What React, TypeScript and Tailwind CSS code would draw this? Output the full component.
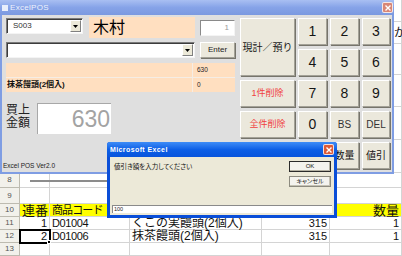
import type { ReactNode } from 'react';
import clsx from 'clsx';

const sans = "font-['Liberation_Sans','Noto_Sans_CJK_JP',sans-serif]";

function Btn({ children, className }: { children?: ReactNode; className?: string }) {
  return (
    <div
      className={clsx(
        'flex items-center justify-center border border-t-white border-l-white border-r-[#a3a197] border-b-[#a3a197] bg-[#ebe8dc] shadow-[1px_1px_0_#76746b]',
        className,
      )}
    >
      {children}
    </div>
  );
}

function Combo({ value, className }: { value?: string; className?: string }) {
  return (
    <div
      className={clsx(
        'flex border border-t-[#7a7a7a] border-l-[#7a7a7a] border-r-[#f4f4f4] border-b-[#f4f4f4] bg-white shadow-[inset_1px_1px_0_#3c3c3c]',
        className,
      )}
    >
      <span className="flex-1 pl-[6px] pt-[1px] text-[8px] leading-[12px] text-[#333]">{value}</span>
      <span className="my-[1px] mr-[1px] flex w-[11px] items-center justify-center border border-t-white border-l-white border-r-[#808080] border-b-[#808080] bg-[#ece9d8]">
        <svg width="5" height="3" viewBox="0 0 5 3">
          <path d="M0 0h5L2.5 3z" fill="#000" />
        </svg>
      </span>
    </div>
  );
}

function CloseX({ className }: { className?: string }) {
  return (
    <div className={clsx('flex items-center justify-center rounded-[2px] border border-white/80', className)}>
      <svg width="6" height="6" viewBox="0 0 6 6">
        <path d="M0.5 0.5l5 5M5.5 0.5l-5 5" stroke="#fff" strokeWidth="1.4" />
      </svg>
    </div>
  );
}

function PosWindow() {
  return (
    <div className="absolute left-0 top-0 flex h-[174px] w-[394px] flex-col bg-[#7f9de3]">
      <div className="flex h-[15px] items-center bg-linear-to-b from-[#a9bff2] via-[#86a3e8] to-[#7b99e0] pl-[2px] pr-[1px]">
        <div className="mr-[2px] h-[6px] w-[6px] bg-[#e8eefc]" />
        <span className="text-[8px] leading-none tracking-[0.3px] text-[#eef2fc]">ExcelPOS</span>
        <CloseX className="ml-auto h-[11px] w-[11px] bg-[#d88676]" />
      </div>
      <div className="mx-[2px] mb-[2px] flex flex-1 bg-[#dfdfdf] pl-[4px] pt-[2px]">
        <div className="flex w-[229px] flex-col">
          <div className="flex h-[21px] items-start">
            <Combo value="S003" className="mt-[1px] h-[16px] w-[77px]" />
            <div className="ml-[6px] flex h-[21px] w-[106px] items-center bg-[#ffdfc0] pl-[4px] text-[16px] leading-none text-black">
              木村
            </div>
            <div className="ml-[5px] mt-[3px] flex h-[16px] w-[35px] items-center justify-end border border-t-[#8a8a8a] border-l-[#8a8a8a] border-r-[#f4f4f4] border-b-[#f4f4f4] bg-white pr-[5px] text-[8px] text-[#9a9a9a]">
              1
            </div>
          </div>
          <div className="mt-[4px] flex h-[16px]">
            <Combo className="h-[16px] w-[189px]" />
            <Btn className="ml-[5px] h-[16px] w-[35px] text-[8px] text-[#222]">Enter</Btn>
          </div>
          <div className="mt-[5px] flex flex-col gap-[1px] bg-[#f5ede5]">
            <div className="flex h-[14px]">
              <div className="w-[186px] bg-[#ffdfc0]" />
              <div className="ml-[1px] flex flex-1 items-center bg-[#ffdfc0] pl-[4px] text-[6.5px] text-[#222]">630</div>
            </div>
            <div className="flex h-[14px]">
              <div className="flex w-[186px] items-center bg-[#ffdfc0] pl-[1px] text-[8px] font-bold text-[#111]">
                抹茶饅頭(2個入)
              </div>
              <div className="ml-[1px] flex flex-1 items-center bg-[#ffdfc0] pl-[4px] text-[6.5px] text-[#222]">0</div>
            </div>
          </div>
          <div className="mt-[11px] flex items-start">
            <div className="mt-[1px] w-[25px] text-[12px] leading-[13px] text-[#222]">
              買上
              <br />
              金額
            </div>
            <div className="ml-[6px] flex h-[31px] w-[74px] items-center justify-end border-l border-t border-[#a8a8a8] bg-white pr-[1px] text-[23px] leading-none text-[#a3a3a3]">
              630
            </div>
          </div>
          <div className="-ml-[3px] mb-[2px] mt-auto text-[6.5px] leading-[8px] text-[#222]">Excel POS Ver2.0</div>
        </div>
        <div className="ml-[5px] mt-[1px] grid grid-cols-[55px_29px_29px_28px] grid-rows-[27px_27px_27px_27px_27px] gap-x-[3px] gap-y-[4px] text-[#151515]">
          <Btn className="row-span-2 text-[10px]">現計／預り</Btn>
          <Btn className="text-[14px]">1</Btn>
          <Btn className="text-[14px]">2</Btn>
          <Btn className="text-[14px]">3</Btn>
          <Btn className="text-[14px]">4</Btn>
          <Btn className="text-[14px]">5</Btn>
          <Btn className="text-[14px]">6</Btn>
          <Btn className="text-[9px] text-[#f04040]">1件削除</Btn>
          <Btn className="text-[14px]">7</Btn>
          <Btn className="text-[14px]">8</Btn>
          <Btn className="text-[14px]">9</Btn>
          <Btn className="text-[9px] text-[#f04040]">全件削除</Btn>
          <Btn className="text-[14px]">0</Btn>
          <Btn className="text-[10px] text-[#333]">BS</Btn>
          <Btn className="text-[10px] text-[#333]">DEL</Btn>
          <Btn className="col-start-3 text-[10px]">数量</Btn>
          <Btn className="border-[#555] text-[10px]">値引</Btn>
        </div>
      </div>
    </div>
  );
}

function Dialog() {
  return (
    <div className="absolute left-[107px] top-[142px] flex h-[76px] w-[230px] flex-col rounded-t-[3px] bg-[#0a4ed8]">
      <div className="flex h-[15px] items-center rounded-t-[3px] bg-linear-to-b from-[#3d8cf7] via-[#0d5fe6] to-[#0854dc] pl-[3px] pr-[3px]">
        <span className="text-[7px] font-bold leading-none tracking-[0.4px] text-white">Microsoft Excel</span>
        <CloseX className="ml-auto h-[11px] w-[11px] bg-[#dc5a38]" />
      </div>
      <div className="mx-[3px] mb-[3px] flex flex-1 flex-col bg-[#ece9d8]">
        <div className="flex">
          <div className="flex-1 pl-[4px] pt-[6px] text-[6.5px] leading-[8px] text-[#111] [font-feature-settings:'palt']">
            値引き額を入力してください
          </div>
          <div className="mr-[3px] mt-[4px] flex w-[42px] flex-col gap-[4px]">
            <div className="flex h-[11px] items-center justify-center border border-[#2b2b2b] bg-[#f4f3ee] text-[6px] text-[#111] shadow-[inset_-1px_-1px_0_#b4b1a3]">
              OK
            </div>
            <div className="flex h-[11px] items-center justify-center border border-[#8d8b80] bg-[#f4f3ee] text-[6px] text-[#111] shadow-[inset_-1px_-1px_0_#c4c1b3] [font-feature-settings:'palt']">
              キャンセル
            </div>
          </div>
        </div>
        <div className="mx-[2px] mb-[2px] mt-auto flex h-[8px] items-center border-t border-l border-[#8a8a8a] bg-white pl-[1px] text-[5.5px] text-[#222]">
          100
        </div>
      </div>
    </div>
  );
}

const cell = 'flex items-center overflow-visible whitespace-nowrap border-b border-r border-[#d4d4d4] px-[2px]';
const head = 'flex items-center justify-center border-b border-r border-[#bdbbb0] bg-[#f2f1eb] text-[8px] text-[#555]';

function Row({ n, children, active }: { n?: string; children: ReactNode; active?: boolean }) {
  return (
    <>
      <div className={clsx(head, active && 'bg-[#c8d3ea] text-[#2c4f9a]')}>{n}</div>
      {children}
    </>
  );
}

function Sheet() {
  const blank = (k: number) => <div key={k} className={cell} />;
  return (
    <div className="grid grid-cols-[20px_30px_80px_132px_68px_72px] grid-rows-[22px_22px_31px_32px_33px_33px_15px_16px_13px_13px_13px_13px] text-[#111]">
      {/* rows 1-7 sit under the POS window */}
      <Row>{[0, 1, 2, 3, 4].map(blank)}</Row>
      <Row>
        {[0, 1, 2, 3].map(blank)}
        <div className={clsx(cell, 'pl-[64px] text-[12px]')}>か</div>
      </Row>
      <Row>{[0, 1, 2, 3, 4].map(blank)}</Row>
      <Row>{[0, 1, 2, 3, 4].map(blank)}</Row>
      <Row>{[0, 1, 2, 3, 4].map(blank)}</Row>
      <Row>{[0, 1, 2, 3, 4].map(blank)}</Row>
      <Row n="8">
        <div className={clsx(cell, 'row-start-7 col-start-2')} />
        <div className={clsx(cell, 'row-start-7 col-start-3')} />
        <div className={clsx(cell, 'row-start-7 col-start-4')} />
        <div className={clsx(cell, 'row-start-7 col-start-5')} />
        <div className={clsx(cell, 'row-start-7 col-start-6')} />
        <div className="col-span-3 col-start-2 row-start-7 ml-[10px] h-[2px] self-center bg-[#8c8c8c]" />
      </Row>
      <Row n="9">{[0, 1, 2, 3, 4].map(blank)}</Row>
      <Row n="10">
        <div className={clsx(cell, 'bg-[#ffff00] text-[13px] leading-none')}>連番</div>
        <div className={clsx(cell, 'bg-[#ffff00] text-[11px] leading-none tracking-[-0.9px]')}>商品コード</div>
        <div className={clsx(cell, 'bg-[#ffff00]')} />
        <div className={clsx(cell, 'bg-[#ffff00]')} />
        <div className={clsx(cell, 'justify-end bg-[#ffff00] text-[13px] leading-none')}>数量</div>
      </Row>
      <Row n="11">
        <div className={clsx(cell, 'justify-end text-[11px]')}>1</div>
        <div className={clsx(cell, 'text-[11px] tracking-[-0.4px]')}>D01004</div>
        <div className={clsx(cell, 'text-[12px]')}>くこの実饅頭(2個入)</div>
        <div className={clsx(cell, 'justify-end text-[11px]')}>315</div>
        <div className={clsx(cell, 'justify-end text-[11px]')}>1</div>
      </Row>
      <Row n="12" active>
        <div className={clsx(cell, 'relative justify-end text-[11px] outline-2 -outline-offset-1 outline-black')}>
          2
          <span className="absolute -bottom-[2px] -right-[2px] h-[4px] w-[4px] border border-white bg-black" />
        </div>
        <div className={clsx(cell, 'text-[11px] tracking-[-0.4px]')}>D01006</div>
        <div className={clsx(cell, 'text-[12px]')}>抹茶饅頭(2個入)</div>
        <div className={clsx(cell, 'justify-end text-[11px]')}>315</div>
        <div className={clsx(cell, 'justify-end text-[11px]')}>1</div>
      </Row>
      <Row n="13">{[0, 1, 2, 3, 4].map(blank)}</Row>
    </div>
  );
}

export default function App() {
  return (
    <div className={clsx('relative h-[256px] w-[402px] overflow-hidden bg-white', sans)}>
      <Sheet />
      <PosWindow />
      <Dialog />
    </div>
  );
}
